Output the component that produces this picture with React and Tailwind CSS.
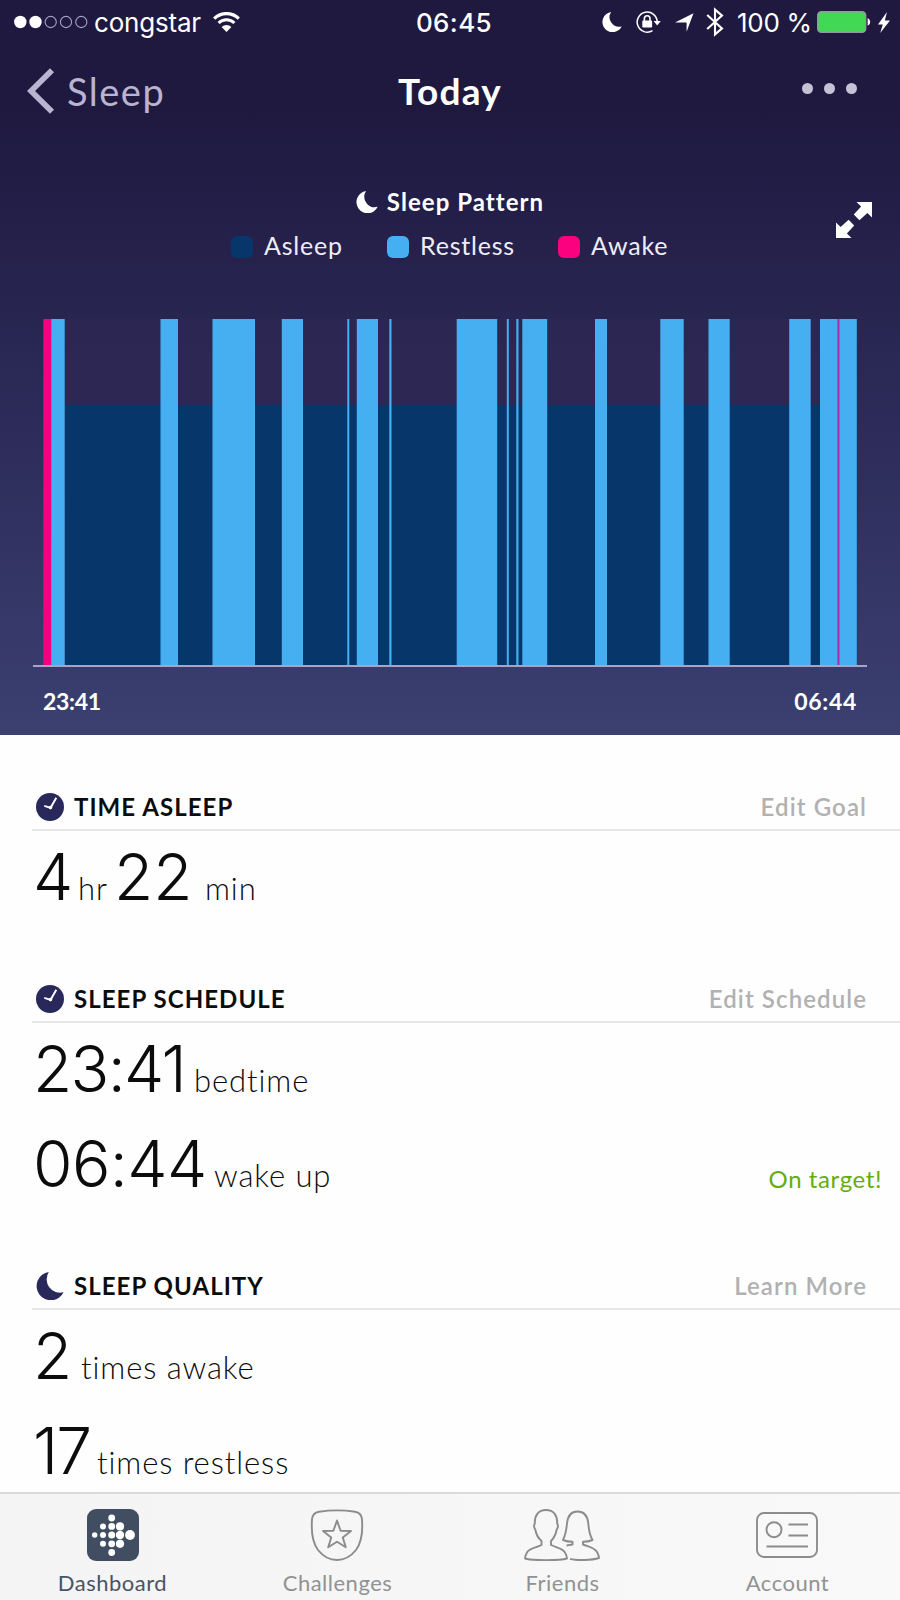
const SEGMENTS = [
    { type: 'awake', x: 43.3, w: 7.9 },
    { type: 'restless', x: 51.2, w: 13.5 },
    { type: 'restless', x: 160.5, w: 17.5 },
    { type: 'restless', x: 212.5, w: 42.5 },
    { type: 'restless', x: 281.8, w: 21.2 },
    { type: 'restless', x: 347.3, w: 2 },
    { type: 'restless', x: 356.8, w: 21.2 },
    { type: 'restless', x: 389.3, w: 2.2 },
    { type: 'restless', x: 456.7, w: 40.5 },
    { type: 'restless', x: 506.8, w: 2 },
    { type: 'restless', x: 516.3, w: 2.2 },
    { type: 'restless', x: 522.3, w: 24.9 },
    { type: 'restless', x: 595, w: 12 },
    { type: 'restless', x: 660.3, w: 23.4 },
    { type: 'restless', x: 708.5, w: 21.2 },
    { type: 'restless', x: 789.2, w: 21.5 },
    { type: 'restless', x: 820, w: 36.8 },
    { type: 'brief', x: 837.4, w: 2.1 },
];

const COLORS = { awake: '#f6007e', restless: '#45aff2', brief: '#a832a8' };

function Moon({ className }) {
    return (
        <svg viewBox="0 0 28 28" className={className} fill="currentColor">
            <path d="M12.8 0A14.2 14.2 0 1 0 27.6 20.2 13.4 13.4 0 0 1 12.8 0Z" />
        </svg>
    );
}

function Clock() {
    return (
        <svg viewBox="0 0 28 28" className="w-7 h-7">
            <circle cx="14" cy="14" r="14" fill="#29285a" />
            <path d="M8.3 12.8 14.6 14.8 20.3 4.8" fill="none" stroke="#fff" strokeWidth="1.9" />
            <circle cx="14.5" cy="14.6" r="1.8" fill="#fff" />
        </svg>
    );
}

function StatusBar() {
    return (
        <div className="h-11 pl-[14px] pr-[10px] flex items-center justify-between font-['Inter',sans-serif] text-[26px] leading-none text-white">
            <div className="w-[396px] flex items-center whitespace-nowrap">
                <svg viewBox="0 0 76 14" className="w-[76px] h-[14px]">
                    <circle cx="6.3" cy="7" r="6.2" fill="#fff" />
                    <circle cx="21.5" cy="7" r="6.2" fill="#fff" />
                    <circle cx="36.7" cy="7" r="5.6" fill="none" stroke="#a7a2c0" strokeWidth="1.1" />
                    <circle cx="52" cy="7" r="5.6" fill="none" stroke="#a7a2c0" strokeWidth="1.1" />
                    <circle cx="67.3" cy="7" r="5.6" fill="none" stroke="#a7a2c0" strokeWidth="1.1" />
                </svg>
                <span className="w-[119px] pl-1 pt-0.5 tracking-[-0.2px]">congstar</span>
                <svg viewBox="0 0 27 20" className="w-[27px] h-5 ml-[4px]">
                    <path d="M1.2 6.6a17.5 17.5 0 0 1 24.6 0" fill="none" stroke="#fff" strokeWidth="3.2" />
                    <path d="M5.6 11a11.3 11.3 0 0 1 15.8 0" fill="none" stroke="#fff" strokeWidth="3" />
                    <path d="M13.5 20 8.6 14.9a7 7 0 0 1 9.8 0Z" fill="#fff" />
                </svg>
            </div>
            <span className="w-[88px] text-center font-medium pt-0.5 tracking-[0.4px]">06:45</span>
            <div className="w-[392px] flex items-center justify-end whitespace-nowrap">
                <Moon className="w-5 h-5 mr-[14px]" />
                <svg viewBox="0 0 25 22" className="w-[25px] h-[22px] mr-[14px]">
                    <path d="M21.2 11A10 10 0 1 0 16.5 19.6" fill="none" stroke="#fff" strokeWidth="1.5" />
                    <path d="M17.6 10H24.8L21.2 14.6Z" fill="#fff" />
                    <rect x="6.3" y="9.6" width="9.8" height="7" rx="0.8" fill="#fff" />
                    <path d="M8.4 10V7.6a2.8 2.8 0 0 1 5.6 0V10" fill="none" stroke="#fff" strokeWidth="1.6" />
                </svg>
                <svg viewBox="0 0 19 19" className="w-[19px] h-[19px] mr-3">
                    <path d="M18.5 0.3 11.6 18.8V9.6H0Z" fill="#fff" />
                </svg>
                <svg viewBox="0 0 18 30" className="w-[18px] h-[30px] mr-[13px]">
                    <path d="M1.2 8 16 21.4 9 27.4V2.6L16 8.6 1.2 22" fill="none" stroke="#fff" strokeWidth="2.1" />
                </svg>
                <span className="w-[80px] pt-0.5 tracking-[-0.3px]">100 %</span>
                <svg viewBox="0 0 54 22" className="w-[54px] h-[22px] mr-[7px]">
                    <rect x="0.7" y="0.7" width="48" height="20.6" rx="3.6" fill="#43d854" stroke="#9a93a8" strokeWidth="1.4" />
                    <path d="M50.6 7.3c3.4 1 3.4 6.4 0 7.4Z" fill="#fff" />
                </svg>
                <svg viewBox="0 0 12 21" className="w-3 h-[21px]">
                    <path d="M9 0 0 12.4h4.8L2.2 21 12 8.4H6.800Z" fill="#fff" />
                </svg>
            </div>
        </div>
    );
}

function NavBar() {
    return (
        <div className="h-[94px] pl-[27px] pr-[43px] flex items-center justify-between text-[36px]">
            <div className="w-[300px] flex items-center text-[#b9b5d0]">
                <svg viewBox="0 0 28 46" className="w-7 h-[46px] mr-[12px]">
                    <path d="M25 2.2 4 23 25 43.8" fill="none" stroke="currentColor" strokeWidth="5.8" />
                </svg>
                <span className="text-[38px] tracking-[1.5px]">Sleep</span>
            </div>
            <h1 className="text-[37px] font-bold text-white tracking-[1.2px]">Today</h1>
            <div className="w-[284px] flex justify-end gap-[11px] pb-[5px]">
                <span className="w-[11px] h-[11px] rounded-full bg-[#c5c2d6]" />
                <span className="w-[11px] h-[11px] rounded-full bg-[#c5c2d6]" />
                <span className="w-[11px] h-[11px] rounded-full bg-[#c5c2d6]" />
            </div>
        </div>
    );
}

function LegendItem({ color, label, className }) {
    return (
        <div className={`flex items-center ${className}`}>
            <span className={`w-[22px] h-[22px] rounded-md mr-[11px] ${color}`} />
            <span className="pb-0.5">{label}</span>
        </div>
    );
}

function SleepPattern() {
    return (
        <section className="text-white">
            <div className="flex">
                <div className="flex-1 px-[14px]" />
                <div className="w-[438px] pt-[44px] text-[25px]">
                    <div className="h-10 flex items-center justify-center">
                        <Moon className="w-[22px] h-[22px] mr-[9px]" />
                        <h2 className="font-bold text-2xl tracking-[1.05px]">Sleep Pattern</h2>
                    </div>
                    <div className="h-[50px] flex items-center text-[#eeedf6] tracking-[0.8px]">
                        <LegendItem color="bg-[#07366b]" label="Asleep" className="w-[156px]" />
                        <LegendItem color="bg-[#45aff2]" label="Restless" className="w-[171px]" />
                        <LegendItem color="bg-[#fb007f]" label="Awake" className="" />
                    </div>
                </div>
                <div className="flex-1 flex justify-end pr-[28px] pt-[64px]">
                    <svg viewBox="0 0 36 36" className="w-9 h-9" fill="#fff">
                        <path d="M20.5 0H36V15.5L31.4 10.9 23.4 18.2 17.8 12.6 25.1 4.6Z" />
                        <path d="M15.5 36H0V20.5L4.6 25.1 12.6 17.8 18.2 23.4 10.9 31.4Z" />
                    </svg>
                </div>
            </div>
            <svg viewBox="0 272 900 395" className="block w-[900px] h-[395px]">
                <rect x="64.7" y="319" width="760" height="86" fill="#2d2853" opacity="0.8" />
                <rect x="64.7" y="405" width="760" height="260" fill="#07366b" />
                {SEGMENTS.map((s) => (
                    <rect key={s.x} x={s.x} y="319" width={s.w} height="346" fill={COLORS[s.type]} />
                ))}
                <rect x="33" y="665" width="834" height="2" fill="#a7a4c8" />
            </svg>
            <div className="h-[67px] px-[43px] pt-[17px] flex justify-between text-[23px] font-bold">
                <span className="tracking-[-0.3px]">23:41</span>
                <span className="tracking-[0.7px]">06:44</span>
            </div>
        </section>
    );
}

function Section({ icon, title, action, children }) {
    return (
        <section className="mb-[50px]">
            <div className="ml-8 pl-1 pr-[33px] h-[46px] flex items-center border-b-2 border-[#e6e6e6] text-2xl">
                {icon}
                <h2 className="ml-[10px] flex-1 font-bold tracking-[1.05px]">{title}</h2>
                <span className="font-semibold tracking-[1.1px] text-[#b1b1b1]">{action}</span>
            </div>
            {children}
        </section>
    );
}

function Row({ children }) {
    return <div className="h-[95.5px] pl-[33px] pr-[18px] flex items-baseline leading-[92px] whitespace-nowrap">{children}</div>;
}

function Num({ className, children }) {
    return (
        <span className={`font-['Inter',sans-serif] [font-feature-settings:'calt'_0] text-[64px] font-[260] ${className}`}>
            {children}
        </span>
    );
}

function Unit({ className, children }) {
    return <span className={`text-[31px] leading-none font-light tracking-[0.9px] ${className}`}>{children}</span>;
}

function Tab({ label, active, children }) {
    return (
        <div className={`flex-1 flex flex-col items-center pt-[14px] text-[22px] leading-none ${active ? 'text-[#4a5361]' : 'text-[#929292]'}`}>
            <div className="h-[54px] flex items-center">{children}</div>
            <span className="mt-[10px] tracking-[0.5px]">{label}</span>
        </div>
    );
}

function TabBar() {
    return (
        <nav className="h-[108px] flex border-t-2 border-[#dadada] bg-gradient-to-r from-[#f4f4f4] to-[#f9f9f9]">
            <Tab label="Dashboard" active>
                <svg viewBox="0 0 52 52" className="w-[52px] h-[52px]">
                    <rect width="52" height="52" rx="9" fill="#414e61" />
                    <g fill="#fff">
                        <circle cx="7.7" cy="26" r="2.7" />
                        <circle cx="16" cy="17.4" r="3" />
                        <circle cx="16" cy="26" r="3" />
                        <circle cx="16" cy="34.8" r="3" />
                        <circle cx="24.7" cy="9" r="3.4" />
                        <circle cx="24.7" cy="17.4" r="3.4" />
                        <circle cx="24.7" cy="26" r="3.5" />
                        <circle cx="24.7" cy="34.8" r="3.4" />
                        <circle cx="24.7" cy="43.5" r="3.4" />
                        <circle cx="33" cy="17.4" r="4.1" />
                        <circle cx="33" cy="26" r="4.2" />
                        <circle cx="33" cy="34.8" r="4.1" />
                        <circle cx="43" cy="26" r="4.9" />
                    </g>
                </svg>
            </Tab>
            <Tab label="Challenges">
                <svg viewBox="0 0 54 52" className="w-[54px] h-[52px] mr-[2px]" fill="none" stroke="#8c8c8c" strokeWidth="1.9" strokeLinejoin="round">
                    <path d="M9 2.8Q27 0 45 2.8 51.6 4 52 10.5 53.5 31 46 41 38 51 27 51T8 41Q.5 31 2 10.5 2.4 4 9 2.8Z" />
                    <path d="M27 11.5 30.6 21.8 41 22 32.8 28.6 35.8 38.2 27 32.8 18.2 38.2 21.2 28.6 13 22 23.4 21.8Z" />
                </svg>
            </Tab>
            <Tab label="Friends">
                <svg viewBox="0 0 76 52" className="w-[76px] h-[52px] mr-[2px]" fill="none" stroke="#8c8c8c" strokeWidth="1.9" strokeLinejoin="round">
                    <path d="M17.5 36V32C14 29 12 25 11.3 20.5 10 19 9.8 16.5 10.8 14.5 10.5 6 14.5 1 22 1S33.5 6 33.2 14.5C34.2 16.5 34 19 32.7 20.5 32 25 30 29 27 32V36C33 39 38.5 39 41 43.5 42.5 46 43 48 43 49.5 36 51.8 8 51.8 1 49.5 1 48 1.5 46 3 43.5 5.5 39 12 39 17.5 36Z" />
                    <path d="M42.5 36.5 48.5 35.5V32.8C45 32.8 42 32.2 39 31 42 25 42.5 20 43 14.5 43.8 6 47.5 2.5 53.5 2.5S63.5 6 64.3 14.5C64.8 21 65.5 26 68.5 31 65.5 32.2 62.5 32.8 59 32.8V35.5C65 38 70.5 38.5 73 43 74.5 45.5 75 47.5 75 49 68 51.5 52 51.5 46 49.8" />
                </svg>
            </Tab>
            <Tab label="Account">
                <svg viewBox="0 0 62 46" className="w-[62px] h-[46px] mr-[1px]" fill="none" stroke="#8c8c8c" strokeWidth="1.9">
                    <rect x="1" y="1" width="60" height="44" rx="7" />
                    <circle cx="18" cy="17.7" r="7.5" />
                    <path d="M32.5 12.5H52M32.5 23.5H52M10.5 34.5H52" />
                </svg>
            </Tab>
        </nav>
    );
}

export default function App() {
    return (
        <div className="w-[900px] h-[1600px] overflow-hidden flex flex-col bg-[#fefefe] font-['Lato',sans-serif] text-[#0c0c0c]">
            <header className="h-[735px] bg-gradient-to-b from-[#1f1940] from-15% via-[#2a2855] via-50% to-[#3b4071]">
                <StatusBar />
                <NavBar />
                <SleepPattern />
            </header>

            <main className="h-[757px] pt-[50px] overflow-hidden">
                <Section icon={<Clock />} title="TIME ASLEEP" action="Edit Goal">
                    <Row>
                        <Num className="w-[45px]">4</Num>
                        <Unit className="w-[36px]">hr</Unit>
                        <Num className="w-[91px]">22</Num>
                        <Unit>min</Unit>
                    </Row>
                </Section>

                <Section icon={<Clock />} title="SLEEP SCHEDULE" action="Edit Schedule">
                    <Row>
                        <Num className="w-[161px] tracking-[-1.7px]">23:41</Num>
                        <Unit>bedtime</Unit>
                    </Row>
                    <Row>
                        <Num className="w-[181px] tracking-[-0.6px]">06:44</Num>
                        <Unit className="flex-1">wake up</Unit>
                        <span className="self-start pt-[49px] text-2xl leading-none tracking-[0.6px] text-[#63ae0c]">On target!</span>
                    </Row>
                </Section>

                <Section icon={<Moon className="w-7 h-7 text-[#29285a]" />} title="SLEEP QUALITY" action="Learn More">
                    <Row>
                        <Num className="w-[48px]">2</Num>
                        <Unit>times awake</Unit>
                    </Row>
                    <Row>
                        <Num className="w-[64px] tracking-[-2px]">17</Num>
                        <Unit>times restless</Unit>
                    </Row>
                </Section>
            </main>

            <TabBar />
        </div>
    );
}
